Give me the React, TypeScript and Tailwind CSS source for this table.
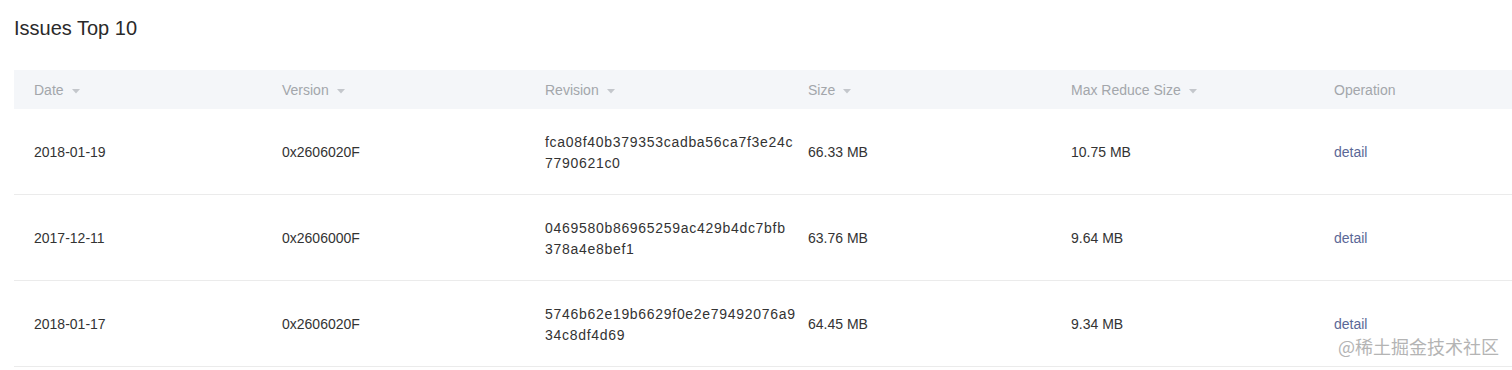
import React from "react";

const columns = [
  { title: "Date", sort: true },
  { title: "Version", sort: true },
  { title: "Revision", sort: true },
  { title: "Size", sort: true },
  { title: "Max Reduce Size", sort: true },
  { title: "Operation", sort: false },
];

const issues = [
  {
    date: "2018-01-19",
    version: "0x2606020F",
    revision: ["fca08f40b379353cadba56ca7f3e24c", "7790621c0"],
    size: "66.33 MB",
    maxReduce: "10.75 MB",
  },
  {
    date: "2017-12-11",
    version: "0x2606000F",
    revision: ["0469580b86965259ac429b4dc7bfb", "378a4e8bef1"],
    size: "63.76 MB",
    maxReduce: "9.64 MB",
  },
  {
    date: "2018-01-17",
    version: "0x2606020F",
    revision: ["5746b62e19b6629f0e2e79492076a9", "34c8df4d69"],
    size: "64.45 MB",
    maxReduce: "9.34 MB",
  },
];

const gridCols =
  "grid grid-cols-[248px_263px_263px_263px_263px_1fr] w-[1560px]";

const Caret = () => (
  <svg width="8" height="5" viewBox="0 0 8 5" className="ml-2 mt-[1px]">
    <path d="M0 0 L8 0 L4 4.5 Z" fill="#c4c7cc" />
  </svg>
);

const App = () => {
  return (
    <div className="relative w-[1512px] h-[370px] overflow-hidden bg-white font-['Liberation_Sans',Arial,sans-serif]">
      <h2 className="pl-[14px] pt-[15px] text-[20px] leading-[26px] text-[#2a2a2a]">
        Issues Top 10
      </h2>

      <div className="ml-[14px] mt-[29px]">
        {/* header */}
        <div className={`${gridCols} h-[39px] pt-[2px] bg-[#f4f6f9] items-center`}>
          {columns.map((col) => (
            <div
              key={col.title}
              className="flex items-center pl-5 text-[14px] text-[#a3a6ab]"
            >
              {col.title}
              {col.sort && <Caret />}
            </div>
          ))}
        </div>

        {/* rows */}
        {issues.map((row) => (
          <div
            key={row.date}
            className={`${gridCols} h-[86px] pt-[2px] border-b border-[#ebebeb] items-center text-[14px] text-[#333]`}
          >
            <div className="pl-5">{row.date}</div>
            <div className="pl-5">{row.version}</div>
            <div className="pl-5 leading-[21px] whitespace-nowrap tracking-[0.7px]">
              <div>{row.revision[0]}</div>
              <div>{row.revision[1]}</div>
            </div>
            <div className="pl-5">{row.size}</div>
            <div className="pl-5">{row.maxReduce}</div>
            <div className="pl-5 text-[#5b6897] cursor-pointer">detail</div>
          </div>
        ))}
      </div>

      {/* watermark */}
      <div className="absolute left-[1338px] top-[335px] whitespace-nowrap text-[18px] leading-[23px] text-[#b4b4b4] font-['Noto_Sans_CJK_SC',sans-serif]">
        @稀土掘金技术社区
      </div>
    </div>
  );
};

export default App;
